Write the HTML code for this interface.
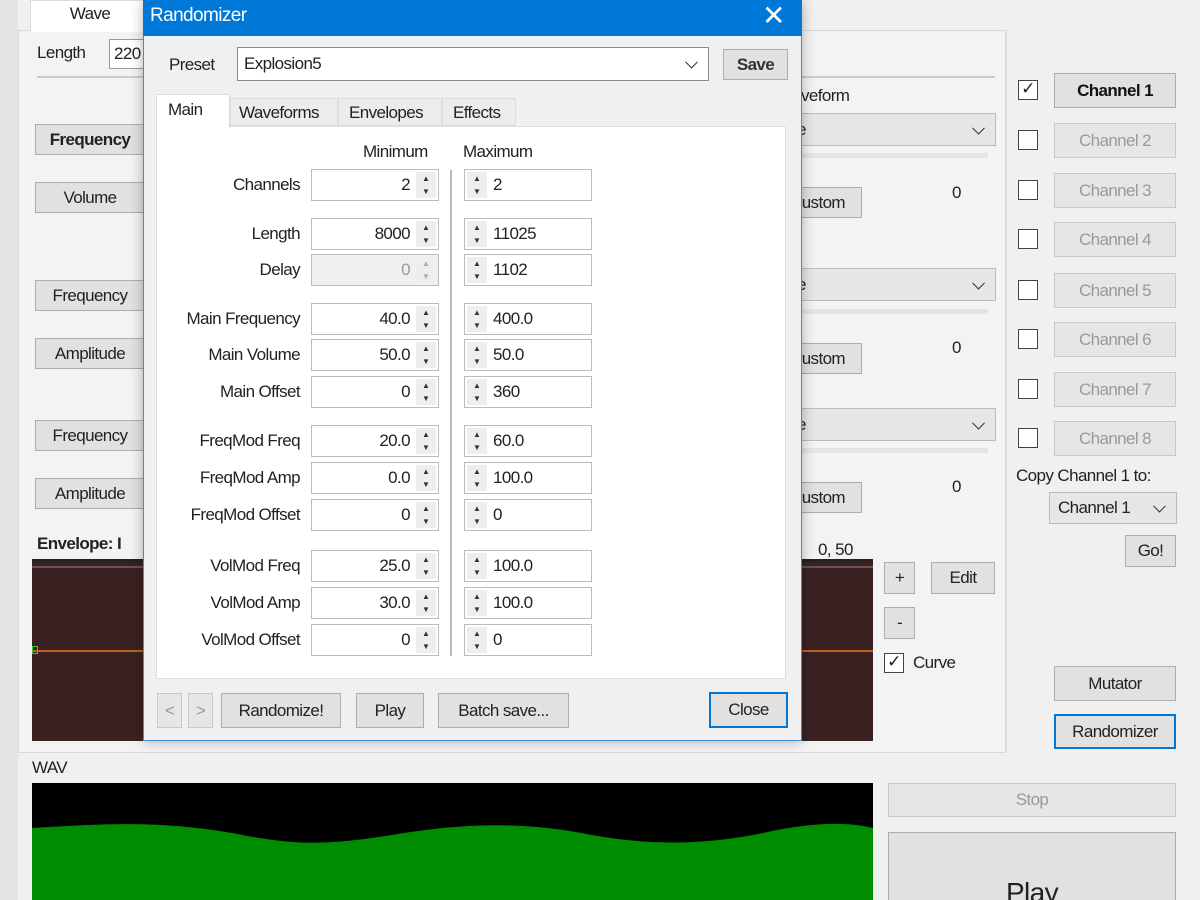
<!DOCTYPE html>
<html style="overflow:hidden;height:900px"><head><meta charset="utf-8"><style>
*{box-sizing:border-box}
body{margin:0;width:1200px;height:900px;overflow:hidden;background:#f0f0f0;font-family:"Liberation Sans",sans-serif;font-size:17px;color:#222;position:relative;letter-spacing:-0.6px}
.a{position:absolute}
.btn{position:absolute;background:#e1e1e1;border:1px solid #adadad;display:flex;align-items:center;justify-content:center;color:#222}
.dis{color:#999;background:#e6e6e6;border-color:#c8c8c8}
.cb{position:absolute;width:20px;height:20px;border:1.5px solid #444;background:#fff}
.combo{position:absolute;background:#e6e6e6;border:1px solid #bbb;display:flex;align-items:center;padding-left:6px}
.combo:after{content:"";position:absolute;right:12px;top:50%;width:8px;height:8px;border-right:1.5px solid #333;border-bottom:1.5px solid #333;transform:translateY(-70%) rotate(45deg)}
.lbl{position:absolute;width:150px;text-align:right}
.box{position:absolute;height:32px;background:#fff;border:1px solid #bbb;display:flex;align-items:center}
.mn{left:311px;width:128px;justify-content:flex-end;padding-right:28px}
.mx{left:464px;width:128px;padding-left:28px}
.sp{position:absolute;top:2px;bottom:2px;width:20px;background:#eee;font-size:8px;line-height:13px;text-align:center;color:#333;letter-spacing:0}
.mn .sp{right:2px}.mx .sp{left:2px}
.gray{background:#f0f0f0;color:#999}
</style></head><body>
<div class="a" style="left:0;top:0;width:18px;height:900px;background:#e4e4e4"></div>
<div class="a" style="left:18px;top:30px;width:988px;height:723px;border:1px solid #d8d8d8;background:#f3f3f3"></div>
<div class="a" style="left:30px;top:0;width:120px;height:32px;background:#fff;border:1px solid #ddd;border-bottom:none;text-align:center;line-height:26px">Wave</div>
<div class="a" style="left:37px;top:43px">Length</div>
<div class="a" style="left:109px;top:39px;width:40px;height:30px;background:#fff;border:1px solid #999;padding:4px 0 0 4px">220</div>
<div class="a" style="left:37px;top:76px;width:958px;height:2px;background:#ccc"></div>
<div class="btn" style="left:35px;top:124px;width:110px;height:31px;font-weight:bold">Frequency</div>
<div class="btn" style="left:35px;top:182px;width:110px;height:31px">Volume</div>
<div class="btn" style="left:35px;top:280px;width:110px;height:31px">Frequency</div>
<div class="btn" style="left:35px;top:338px;width:110px;height:31px">Amplitude</div>
<div class="btn" style="left:35px;top:420px;width:110px;height:31px">Frequency</div>
<div class="btn" style="left:35px;top:478px;width:110px;height:31px">Amplitude</div>
<div class="a" style="left:37px;top:534px;font-weight:bold">Envelope: I</div>
<div class="a" style="left:32px;top:559px;width:841px;height:182px;background:#3a2222;border-top:3px solid #222"></div>
<div class="a" style="left:32px;top:566px;width:841px;height:2px;background:#6a5050"></div>
<div class="a" style="left:32px;top:650px;width:841px;height:2px;background:#c06020"></div>
<div class="a" style="left:32px;top:646px;width:6px;height:8px;border:1px solid #3c3"></div>
<div class="a" style="left:818px;top:540px">0, 50</div>
<div class="a" style="left:801px;top:86px">veform</div>
<div class="combo" style="left:790px;top:113px;width:206px;height:33px">e</div>
<div class="combo" style="left:790px;top:268px;width:206px;height:33px">e</div>
<div class="combo" style="left:790px;top:408px;width:206px;height:33px">e</div>
<div class="a" style="left:801px;top:153px;width:187px;height:5px;background:#e4e4e4"></div>
<div class="a" style="left:801px;top:309px;width:187px;height:5px;background:#e4e4e4"></div>
<div class="a" style="left:801px;top:448px;width:187px;height:5px;background:#e4e4e4"></div>
<div class="btn" style="left:790px;top:187px;width:72px;height:31px;justify-content:flex-end;padding-right:16px">ustom</div>
<div class="btn" style="left:790px;top:343px;width:72px;height:31px;justify-content:flex-end;padding-right:16px">ustom</div>
<div class="btn" style="left:790px;top:482px;width:72px;height:31px;justify-content:flex-end;padding-right:16px">ustom</div>
<div class="a" style="left:952px;top:183px">0</div>
<div class="a" style="left:952px;top:338px">0</div>
<div class="a" style="left:952px;top:477px">0</div>
<div class="btn" style="left:884px;top:562px;width:31px;height:32px">+</div>
<div class="btn" style="left:931px;top:562px;width:64px;height:32px">Edit</div>
<div class="btn" style="left:884px;top:607px;width:31px;height:32px">-</div>
<div class="cb" style="left:884px;top:653px;font-size:17px;line-height:16px;text-align:center">✓</div>
<div class="a" style="left:913px;top:653px">Curve</div>
<div class="a" style="left:1006px;top:30px;width:1px;height:722px;background:#ddd"></div>
<div class="cb" style="left:1018px;top:80px;line-height:16px;text-align:center;font-size:17px">✓</div>
<div class="btn" style="left:1054px;top:73px;width:122px;height:35px;font-weight:bold;color:#111">Channel 1</div>
<div class="cb" style="left:1018px;top:130px"></div><div class="btn dis" style="left:1054px;top:123px;width:122px;height:35px">Channel 2</div>
<div class="cb" style="left:1018px;top:180px"></div><div class="btn dis" style="left:1054px;top:173px;width:122px;height:35px">Channel 3</div>
<div class="cb" style="left:1018px;top:229px"></div><div class="btn dis" style="left:1054px;top:222px;width:122px;height:35px">Channel 4</div>
<div class="cb" style="left:1018px;top:280px"></div><div class="btn dis" style="left:1054px;top:273px;width:122px;height:35px">Channel 5</div>
<div class="cb" style="left:1018px;top:329px"></div><div class="btn dis" style="left:1054px;top:322px;width:122px;height:35px">Channel 6</div>
<div class="cb" style="left:1018px;top:379px"></div><div class="btn dis" style="left:1054px;top:372px;width:122px;height:35px">Channel 7</div>
<div class="cb" style="left:1018px;top:428px"></div><div class="btn dis" style="left:1054px;top:421px;width:122px;height:35px">Channel 8</div>
<div class="a" style="left:1016px;top:466px">Copy Channel 1 to:</div>
<div class="combo" style="left:1049px;top:492px;width:128px;height:32px;padding-left:8px">Channel 1</div>
<div class="btn" style="left:1125px;top:535px;width:51px;height:32px">Go!</div>
<div class="btn" style="left:1054px;top:666px;width:122px;height:35px">Mutator</div>
<div class="btn" style="left:1054px;top:714px;width:122px;height:35px;border:2px solid #0078d7">Randomizer</div>
<div class="a" style="left:32px;top:758px">WAV</div>
<svg class="a" style="left:32px;top:783px" width="841" height="117"><rect width="841" height="117" fill="#000"/><path d="M0 45 C80 40 130 38 200 50 C260 62 290 63 360 52 C430 40 490 38 560 52 C620 63 680 62 740 48 C790 38 820 40 841 45 L841 117 L0 117Z" fill="#008c00"/></svg>
<div class="btn dis" style="left:888px;top:783px;width:288px;height:34px">Stop</div>
<div class="btn" style="left:888px;top:832px;width:288px;height:68px;font-size:28px;padding-top:52px;border-bottom:none">Play</div>
<div class="a" style="left:143px;top:0;width:659px;height:741px;background:#f0f0f0;border:1px solid #3a8fdc;box-shadow:0 0 12px rgba(0,0,0,.3)"></div>
<div class="a" style="left:143px;top:0;width:659px;height:36px;background:#0078d7;color:#fff;font-size:19px;padding:5px 0 0 7px">Randomizer</div>
<div class="a" style="left:762px;top:0;color:#fff;font-size:28px;line-height:32px">✕</div>
<div class="a" style="left:169px;top:55px">Preset</div>
<div class="combo" style="left:237px;top:47px;width:472px;height:34px;background:#fff;border-color:#888">Explosion5</div>
<div class="btn" style="left:723px;top:49px;width:65px;height:31px;font-weight:bold;color:#333">Save</div>
<div class="a" style="left:156px;top:126px;width:630px;height:553px;background:#fff;border:1px solid #ddd"></div>
<div class="a" style="left:156px;top:94px;width:74px;height:34px;background:#fff;border:1px solid #ddd;border-bottom:none;padding:5px 0 0 11px">Main</div>
<div class="a" style="left:230px;top:98px;width:108px;height:28px;background:#ececec;border:1px solid #ddd;padding:4px 0 0 8px">Waveforms</div>
<div class="a" style="left:338px;top:98px;width:104px;height:28px;background:#ececec;border:1px solid #ddd;padding:4px 0 0 10px">Envelopes</div>
<div class="a" style="left:442px;top:98px;width:74px;height:28px;background:#ececec;border:1px solid #ddd;padding:4px 0 0 10px">Effects</div>
<div class="a" style="left:363px;top:142px">Minimum</div>
<div class="a" style="left:463px;top:142px">Maximum</div>
<div class="a" style="left:450px;top:170px;width:2px;height:486px;background:#bbb"></div>

<div class="lbl" style="left:150px;top:175px">Channels</div>
<div class="box mn" style="top:169px">2<div class="sp">▲<br>▼</div></div>
<div class="box mx" style="top:169px">2<div class="sp">▲<br>▼</div></div>
<div class="lbl" style="left:150px;top:224px">Length</div>
<div class="box mn" style="top:218px">8000<div class="sp">▲<br>▼</div></div>
<div class="box mx" style="top:218px">11025<div class="sp">▲<br>▼</div></div>
<div class="lbl" style="left:150px;top:260px">Delay</div>
<div class="box mn gray" style="top:254px">0<div class="sp" style="color:#aaa">▲<br>▼</div></div>
<div class="box mx" style="top:254px">1102<div class="sp">▲<br>▼</div></div>
<div class="lbl" style="left:150px;top:309px">Main Frequency</div>
<div class="box mn" style="top:303px">40.0<div class="sp">▲<br>▼</div></div>
<div class="box mx" style="top:303px">400.0<div class="sp">▲<br>▼</div></div>
<div class="lbl" style="left:150px;top:345px">Main Volume</div>
<div class="box mn" style="top:339px">50.0<div class="sp">▲<br>▼</div></div>
<div class="box mx" style="top:339px">50.0<div class="sp">▲<br>▼</div></div>
<div class="lbl" style="left:150px;top:382px">Main Offset</div>
<div class="box mn" style="top:376px">0<div class="sp">▲<br>▼</div></div>
<div class="box mx" style="top:376px">360<div class="sp">▲<br>▼</div></div>
<div class="lbl" style="left:150px;top:431px">FreqMod Freq</div>
<div class="box mn" style="top:425px">20.0<div class="sp">▲<br>▼</div></div>
<div class="box mx" style="top:425px">60.0<div class="sp">▲<br>▼</div></div>
<div class="lbl" style="left:150px;top:468px">FreqMod Amp</div>
<div class="box mn" style="top:462px">0.0<div class="sp">▲<br>▼</div></div>
<div class="box mx" style="top:462px">100.0<div class="sp">▲<br>▼</div></div>
<div class="lbl" style="left:150px;top:505px">FreqMod Offset</div>
<div class="box mn" style="top:499px">0<div class="sp">▲<br>▼</div></div>
<div class="box mx" style="top:499px">0<div class="sp">▲<br>▼</div></div>
<div class="lbl" style="left:150px;top:556px">VolMod Freq</div>
<div class="box mn" style="top:550px">25.0<div class="sp">▲<br>▼</div></div>
<div class="box mx" style="top:550px">100.0<div class="sp">▲<br>▼</div></div>
<div class="lbl" style="left:150px;top:593px">VolMod Amp</div>
<div class="box mn" style="top:587px">30.0<div class="sp">▲<br>▼</div></div>
<div class="box mx" style="top:587px">100.0<div class="sp">▲<br>▼</div></div>
<div class="lbl" style="left:150px;top:630px">VolMod Offset</div>
<div class="box mn" style="top:624px">0<div class="sp">▲<br>▼</div></div>
<div class="box mx" style="top:624px">0<div class="sp">▲<br>▼</div></div>

<div class="btn dis" style="left:157px;top:693px;width:25px;height:35px">&lt;</div>
<div class="btn dis" style="left:188px;top:693px;width:25px;height:35px">&gt;</div>
<div class="btn" style="left:221px;top:693px;width:120px;height:35px">Randomize!</div>
<div class="btn" style="left:356px;top:693px;width:68px;height:35px">Play</div>
<div class="btn" style="left:438px;top:693px;width:131px;height:35px">Batch save...</div>
<div class="btn" style="left:709px;top:692px;width:79px;height:36px;border:2px solid #0078d7">Close</div>
</body></html>
